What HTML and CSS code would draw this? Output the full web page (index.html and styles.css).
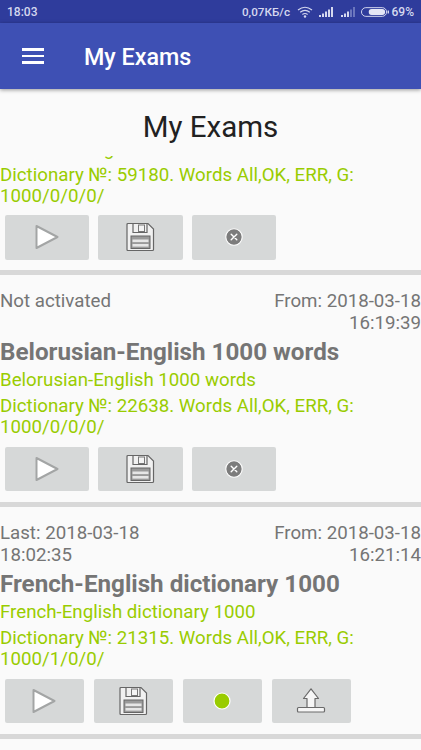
FILE: index.html
```html
<!DOCTYPE html>
<html lang="en">
<head>
<meta charset="utf-8">
<title>My Exams</title>
<link rel="stylesheet" href="styles.css">
</head>
<body>
<svg class="defs" width="0" height="0" aria-hidden="true">
  <symbol id="i-play" viewBox="0 0 24 26">
    <path d="M1.500 2 L22.500 13 L1.500 24 Z" fill="#fff" stroke="#a3a5a5" stroke-width="2" stroke-linejoin="round"/>
  </symbol>
  <symbol id="i-save" viewBox="0 0 30 30">
    <path d="M2 2.500 Q2 1.500 3 1.500 H23 L28.500 7 V27.500 Q28.500 28.500 27.500 28.500 H3 Q2 28.500 2 27.500 Z" fill="#f1f1f1" stroke="#666" stroke-width="1.200"/>
    <path d="M8 1.500 V10.500 H22 V1.500" fill="none" stroke="#666" stroke-width="1.200"/>
    <rect x="13.500" y="3" width="6" height="6.500" fill="#f4f4f4" stroke="#777" stroke-width="1"/>
    <rect x="6" y="14" width="19" height="12.500" fill="#9a9a9a" stroke="#666" stroke-width="1"/>
    <rect x="7.500" y="17.500" width="16" height="2.600" fill="#e6e6e6"/>
    <rect x="7.500" y="22" width="16" height="2.600" fill="#e6e6e6"/>
  </symbol>
  <symbol id="i-cancel" viewBox="0 0 18 18">
    <circle cx="9" cy="9" r="8.200" fill="#7c7c7c" stroke="#fff" stroke-width="1.100"/>
    <path d="M6.200 6.200 L11.800 11.800 M11.800 6.200 L6.200 11.800" stroke="#fff" stroke-width="1.400" stroke-linecap="round"/>
  </symbol>
  <symbol id="i-dot" viewBox="0 0 18 18">
    <circle cx="9" cy="9" r="8" fill="#9c0" stroke="#fff" stroke-width="1.200"/>
  </symbol>
  <symbol id="i-upload" viewBox="0 0 30 26">
    <path d="M15 .800 L22.500 10.500 H19 V19.500 H11 V10.500 H7.500 Z" fill="#f6f6f6" stroke="#6a6a6a" stroke-width="1.200" stroke-linejoin="round"/>
    <rect x="1.500" y="19.500" width="27" height="4.500" rx="1" fill="#f6f6f6" stroke="#6a6a6a" stroke-width="1.200"/>
  </symbol>
</svg>

<div class="status">
  <span class="status-time">18:03</span>
  <div class="status-right">
    <span class="status-net">0,07КБ/с</span>
    <svg class="st-wifi" width="16" height="12" viewBox="0 0 16 12">
      <g fill="none" stroke="#d5d8ef" stroke-width="1.200">
        <path d="M1 4 Q8 -1.500 15 4"/>
        <path d="M3.200 6.300 Q8 2.500 12.800 6.300"/>
        <path d="M5.400 8.500 Q8 6.500 10.600 8.500"/>
      </g>
      <circle cx="8" cy="10.500" r="1.200" fill="#d5d8ef"/>
    </svg>
    <svg class="st-sig" width="15" height="10" viewBox="0 0 15 10">
      <g fill="#d5d8ef">
        <rect x="0" y="8" width="2" height="2"/><rect x="3" y="6.500" width="2" height="3.500"/>
        <rect x="6" y="4.500" width="2" height="5.500"/><rect x="9" y="2.500" width="2" height="7.500"/>
        <rect x="12" y="0" width="2" height="10"/>
      </g>
    </svg>
    <svg class="st-sig2" width="15" height="10" viewBox="0 0 15 10">
      <g fill="#d5d8ef">
        <rect x="0" y="8" width="2" height="2"/><rect x="3" y="6.500" width="2" height="3.500"/>
        <rect x="6" y="4.500" width="2" height="5.500"/>
      </g>
      <g fill="#6b76bd">
        <rect x="9" y="2.500" width="2" height="7.500"/><rect x="12" y="0" width="2" height="10"/>
      </g>
    </svg>
    <svg class="st-batt" width="28" height="10" viewBox="0 0 29 10">
      <rect x=".5" y=".5" width="26" height="9" rx="4.500" fill="none" stroke="#d5d8ef"/>
      <rect x="8" y="2" width="17" height="6" rx="3" fill="#e4e6f5"/>
      <rect x="27.500" y="3.500" width="1.500" height="3" fill="#d5d8ef"/>
    </svg>
    <span class="status-pct">69%</span>
  </div>
</div>

<header class="toolbar">
  <div class="burger"><span></span><span></span><span></span></div>
  <div class="toolbar-title">My Exams</div>
</header>

<h1 class="heading">My Exams</h1>

<main class="list">
  <article class="card card-scrolled">
    <div class="sub">Ukrainian-English 1000 words</div>
    <div class="dict">Dictionary №: 59180. Words All,OK, ERR, G: 1000/0/0/0/</div>
    <div class="actions">
      <button class="btn"><svg width="24" height="26"><use href="#i-play"/></svg></button>
      <button class="btn"><svg width="30" height="30"><use href="#i-save"/></svg></button>
      <button class="btn"><svg width="18" height="18"><use href="#i-cancel"/></svg></button>
    </div>
  </article>

  <article class="card">
    <div class="meta"><div class="meta-left">Not activated</div><div class="meta-right">From: 2018-03-18 16:19:39</div></div>
    <div class="title">Belorusian-English 1000 words</div>
    <div class="sub">Belorusian-English 1000 words</div>
    <div class="dict">Dictionary №: 22638. Words All,OK, ERR, G: 1000/0/0/0/</div>
    <div class="actions">
      <button class="btn"><svg width="24" height="26"><use href="#i-play"/></svg></button>
      <button class="btn"><svg width="30" height="30"><use href="#i-save"/></svg></button>
      <button class="btn"><svg width="18" height="18"><use href="#i-cancel"/></svg></button>
    </div>
  </article>

  <article class="card">
    <div class="meta"><div class="meta-left">Last: 2018-03-18 18:02:35</div><div class="meta-right">From: 2018-03-18 16:21:14</div></div>
    <div class="title">French-English dictionary 1000</div>
    <div class="sub">French-English dictionary 1000</div>
    <div class="dict">Dictionary №: 21315. Words All,OK, ERR, G: 1000/1/0/0/</div>
    <div class="actions actions-four">
      <button class="btn"><svg width="24" height="26"><use href="#i-play"/></svg></button>
      <button class="btn"><svg width="30" height="30"><use href="#i-save"/></svg></button>
      <button class="btn"><svg width="18" height="18"><use href="#i-dot"/></svg></button>
      <button class="btn"><svg width="30" height="26"><use href="#i-upload"/></svg></button>
    </div>
  </article>
</main>
</body>
</html>
```

FILE: styles.css
```css
* { box-sizing: border-box; }

html, body {
  margin: 0;
  height: 100%;
  overflow: hidden;
}

body {
  display: flex;
  flex-direction: column;
  background: #fafafa;
  font-family: Roboto, "Liberation Sans", sans-serif;
}

.defs { position: absolute; }

.status {
  flex: none;
  height: 23px;
  background: #2f3c9c;
  color: #d5d8ef;
  font-size: 11.700px;
  font-weight: 500;
  display: flex;
  align-items: center;
  justify-content: space-between;
  padding: 0 7px 0 7px;
}

.status-time { font-size: 12px; }
.status-pct { font-size: 12px; margin-left: 3px; }

.status-right {
  display: flex;
  align-items: center;
}

.st-wifi { margin-left: 7px; }
.st-sig { margin-left: 6px; }
.st-sig2 { margin-left: 7px; }
.st-batt { margin-left: 4.500px; }

.toolbar {
  flex: none;
  height: 66px;
  background: #3e50b4;
  color: #fff;
  display: flex;
  align-items: center;
  padding-left: 22px;
  box-shadow: 0 1px 4px rgba(0, 0, 0, 0.4);
  position: relative;
  z-index: 1;
}

.burger {
  width: 22px;
  display: flex;
  flex-direction: column;
  gap: 4px;
}

.burger span {
  height: 2.500px;
  background: #fff;
}

.toolbar-title {
  margin-left: 40px;
  margin-top: 1.500px;
  font-size: 23.300px;
  font-weight: 500;
}

.heading {
  flex: none;
  height: 67px;
  margin: 0;
  padding-top: 9px;
  display: flex;
  align-items: center;
  justify-content: center;
  font-size: 29.500px;
  font-weight: 400;
  color: #212121;
}

.list {
  flex: 1;
  min-height: 0;
  overflow: hidden;
}

.card {
  height: 232px;
  padding-top: 15px;
  border-bottom: 5px solid #d8d8d8;
  font-size: 18.700px;
}

.card-scrolled {
  height: auto;
  margin-top: -18.500px;
  padding-top: 0;
  padding-bottom: 10.500px;
}

.meta {
  display: flex;
  justify-content: space-between;
  line-height: 22px;
  color: #757575;
}

.meta-left { width: 50%; }
.meta-right { width: 50%; text-align: right; }

.title {
  height: 35px;
  line-height: 36px;
  font-size: 24.200px;
  font-weight: 700;
  color: #757575;
  white-space: nowrap;
}

.sub {
  line-height: 22px;
  color: #99cc00;
  white-space: nowrap;
}

.dict {
  margin-top: 5px;
  line-height: 21px;
  color: #99cc00;
}

.actions {
  display: flex;
  gap: 9px;
  margin-top: 8.500px;
  padding-left: 4.500px;
}

.btn {
  width: 84.500px;
  height: 44.500px;
  padding: 0;
  border: none;
  border-radius: 2px;
  background: #d6d8d8;
  display: flex;
  align-items: center;
  justify-content: center;
}

.actions-four { gap: 9.500px; }
.actions-four .btn { width: 79.500px; }
```
